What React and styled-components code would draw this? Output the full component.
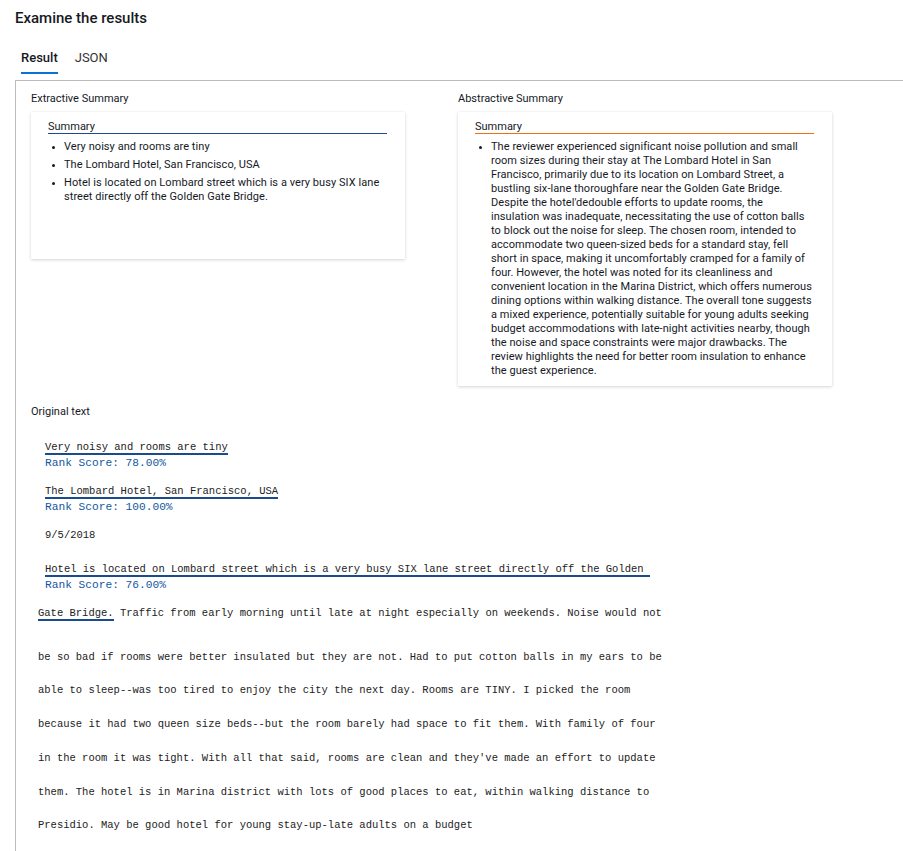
import React from "react";
import styled, { createGlobalStyle } from "styled-components";

const extractive = [
  "Very noisy and rooms are tiny",
  "The Lombard Hotel, San Francisco, USA",
  "Hotel is located on Lombard street which is a very busy SIX lane street directly off the Golden Gate Bridge.",
];

const abstractive =
  "The reviewer experienced significant noise pollution and small room sizes during their stay at The Lombard Hotel in San Francisco, primarily due to its location on Lombard Street, a bustling six-lane thoroughfare near the Golden Gate Bridge. Despite the hotel'dedouble efforts to update rooms, the insulation was inadequate, necessitating the use of cotton balls to block out the noise for sleep. The chosen room, intended to accommodate two queen-sized beds for a standard stay, fell short in space, making it uncomfortably cramped for a family of four. However, the hotel was noted for its cleanliness and convenient location in the Marina District, which offers numerous dining options within walking distance. The overall tone suggests a mixed experience, potentially suitable for young adults seeking budget accommodations with late-night activities nearby, though the noise and space constraints were major drawbacks. The review highlights the need for better room insulation to enhance the guest experience.";

const restLines = [
  "be so bad if rooms were better insulated but they are not. Had to put cotton balls in my ears to be",
  "able to sleep--was too tired to enjoy the city the next day. Rooms are TINY. I picked the room",
  "because it had two queen size beds--but the room barely had space to fit them. With family of four",
  "in the room it was tight. With all that said, rooms are clean and they've made an effort to update",
  "them. The hotel is in Marina district with lots of good places to eat, within walking distance to",
  "Presidio. May be good hotel for young stay-up-late adults on a budget",
];

const GlobalStyle = createGlobalStyle`
  body {
    margin: 0;
    overflow-x: hidden;
    font-family: Roboto, "Liberation Sans", Arial, sans-serif;
    color: #16191f;
    background: #fff;
  }
`;

const Page = styled.div`
  padding: 8px 0 0 15px;
`;

const Title = styled.h2`
  margin: 0;
  font-size: 15px;
  line-height: 20px;
  font-weight: 500;
  color: #16191f;
`;

const Tabs = styled.div`
  display: flex;
  gap: 17px;
  margin: 22px 0 0 6px;
`;

const Tab = styled.div`
  font-size: 13px;
  line-height: 16px;
  font-weight: ${(p) => (p.$active ? 500 : 400)};
  color: ${(p) => (p.$active ? "#16191f" : "#333")};
  padding-bottom: 6px;
  border-bottom: 2px solid ${(p) => (p.$active ? "#0972d3" : "transparent")};
`;

const Panel = styled.div`
  margin-top: 6px;
  margin-right: -40px;
  border: 1px solid #bcbcbc;
  border-bottom: none;
  padding: 11px 15px 0 15px;
  min-height: 800px;
`;

const Columns = styled.div`
  display: grid;
  grid-template-columns: 374px 374px;
  column-gap: 53px;
  align-items: start;
`;

const Label = styled.div`
  font-size: 11px;
  line-height: 14px;
  color: #16191f;
`;

const Card = styled.div`
  margin-top: 6px;
  min-height: 147px;
  box-sizing: border-box;
  padding: 8px 18px 8px 17px;
  background: #fff;
  box-shadow: 0 1px 3px rgba(0, 0, 0, 0.16), 0 0 1px rgba(0, 0, 0, 0.08);
`;

const CardHead = styled.div`
  font-size: 11px;
  line-height: 13px;
  color: #16191f;
  border-bottom: 1px solid ${(p) => p.$accent};
`;

const List = styled.ul`
  margin: 6px 0 0 0;
  padding-left: 16px;
  list-style: disc;
  li {
    font-size: 11px;
    line-height: 14px;
    letter-spacing: 0.06px;
    color: #16191f;
  }
  li + li {
    margin-top: 4px;
  }
  li::marker {
    font-size: 9px;
  }
`;

const Original = styled.div`
  margin-top: 19px;
`;

const Mono = styled.div`
  margin-top: 22px;
  padding-left: 7px;
  font-family: "Liberation Mono", "Courier New", monospace;
  font-size: 10.5px;
  color: #222;
  white-space: pre;
`;

const Hit = styled.div`
  margin: 0 0 ${(p) => p.$after}px 7px;
`;

const Sentence = styled.span`
  display: inline-block;
  line-height: 12px;
  border-bottom: 2px solid #1a4b8c;
`;

const Rank = styled.div`
  line-height: 16px;
  font-size: 11.2px;
  color: #13579f;
`;

const Plain = styled.div`
  margin: 0 0 ${(p) => p.$after || 0}px 7px;
  line-height: 16px;
`;

const Line = styled.div`
  line-height: 33.7px;
  margin-bottom: ${(p) => p.$after || 0}px;
`;

const Marked = styled.span`
  border-bottom: 2px solid #1a4b8c;
`;

export default function App() {
  return (
    <>
      <GlobalStyle />
      <Page>
        <Title>Examine the results</Title>
        <Tabs>
          <Tab $active>Result</Tab>
          <Tab>JSON</Tab>
        </Tabs>
        <Panel>
          <Columns>
            <div>
              <Label>Extractive Summary</Label>
              <Card>
                <CardHead $accent="#1a4b8c">Summary</CardHead>
                <List>
                  {extractive.map((t) => (
                    <li key={t}>{t}</li>
                  ))}
                </List>
              </Card>
            </div>
            <div>
              <Label>Abstractive Summary</Label>
              <Card>
                <CardHead $accent="#ec7211">Summary</CardHead>
                <List>
                  <li>{abstractive}</li>
                </List>
              </Card>
            </div>
          </Columns>
          <Original>
            <Label>Original text</Label>
            <Mono>
              <Hit $after={14}>
                <Sentence>Very noisy and rooms are tiny</Sentence>
                <Rank>Rank Score: 78.00%</Rank>
              </Hit>
              <Hit $after={12}>
                <Sentence>The Lombard Hotel, San Francisco, USA</Sentence>
                <Rank>Rank Score: 100.00%</Rank>
              </Hit>
              <Plain $after={20}>9/5/2018</Plain>
              <Hit $after={4}>
                <Sentence>
                  {"Hotel is located on Lombard street which is a very busy SIX lane street directly off the Golden "}
                </Sentence>
                <Rank>Rank Score: 76.00%</Rank>
              </Hit>
              <Line $after={10}>
                <Marked>Gate Bridge.</Marked>
                {" Traffic from early morning until late at night especially on weekends. Noise would not"}
              </Line>
              {restLines.map((l) => (
                <Line key={l}>{l}</Line>
              ))}
            </Mono>
          </Original>
        </Panel>
      </Page>
    </>
  );
}
